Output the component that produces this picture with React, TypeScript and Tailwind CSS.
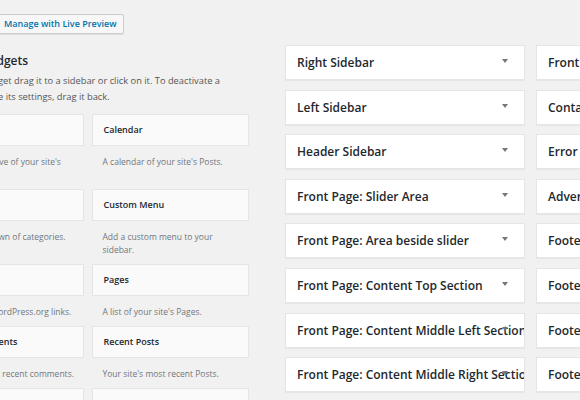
import { ReactNode } from "react";

const widgets = [
  { name: "Archives", desc: "A monthly archive of your site's Posts." },
  { name: "Calendar", desc: "A calendar of your site's Posts." },
  { name: "Categories", desc: "A list or dropdown of categories." },
  { name: "Custom Menu", desc: "Add a custom menu to your sidebar." },
  { name: "Meta", desc: "Login, RSS, & WordPress.org links." },
  { name: "Pages", desc: "A list of your site's Pages." },
  { name: "Recent Comments", desc: "Your site's most recent comments." },
  { name: "Recent Posts", desc: "Your site's most recent Posts." },
  { name: "RSS", desc: "Entries from any RSS or Atom feed." },
  { name: "Search", desc: "A search form for your site." },
];

const leftSidebars = [
  "Right Sidebar",
  "Left Sidebar",
  "Header Sidebar",
  "Front Page: Slider Area",
  "Front Page: Area beside slider",
  "Front Page: Content Top Section",
  "Front Page: Content Middle Left Section",
  "Front Page: Content Middle Right Section",
];

const rightSidebars = [
  "Front Page: Content Bottom Section",
  "Contact Page Sidebar",
  "Error 404 Page Sidebar",
  "Advertisement Area",
  "Footer 1",
  "Footer 2",
  "Footer 3",
  "Footer 4",
];

function SidebarBox({ title }: { title: string }): ReactNode {
  return (
    <div className="relative h-[35px] w-[240px] shrink-0 border border-[#e5e5e5] bg-white shadow-[0_1px_1px_rgba(0,0,0,0.04)]">
      <h3 className="overflow-hidden whitespace-nowrap pl-[11px] pr-[5px] text-[12px] font-semibold leading-[33px] text-[#23282d]">
        {title}
      </h3>
      <span className="absolute right-[16px] top-[13px] h-0 w-0 border-x-[3px] border-t-[4px] border-x-transparent border-t-[#72777c]" />
    </div>
  );
}

export default function App() {
  return (
    <div className="h-[400px] w-[580px] overflow-hidden bg-[#f1f1f1] font-['Open_Sans','Noto_Sans',sans-serif]">
      <div className="-ml-[74px] w-[700px]">
        <div className="flex h-[45px] items-start pt-[14px]">
          <button className="ml-[71px] h-[20px] rounded-[2px] border border-[#ccc] bg-[#f7f7f7] px-[6px] text-[9px] font-semibold leading-[18px] text-[#0073aa] shadow-[0_1px_0_#ddd]">
            Manage with Live Preview
          </button>
        </div>

        <div className="flex">
          <div className="w-[323px] shrink-0">
            <h2 className="pt-[8px] text-[12px] font-semibold leading-[16px] text-[#23282d]">Available Widgets</h2>
            <p className="mt-[4px] text-[9.3px] leading-[16px] text-[#555]">
              To activate a widget drag it to a sidebar or click on it. To deactivate a
              <br />
              widget and delete its settings, drag it back.
            </p>
            <div className="mt-[9px] grid grid-cols-2 gap-x-[8px]">
              {widgets.map((w) => (
                <div key={w.name}>
                  <div className="h-[32px] border border-[#e5e5e5] bg-[#fafafa] pl-[11px] text-[9px] font-semibold leading-[30px] text-[#23282d]">
                    {w.name}
                  </div>
                  <p className="pb-[8px] pl-[11px] pr-[8px] pt-[9px] text-[8.5px] leading-[13px] text-[#72777c]">
                    {w.desc}
                  </p>
                </div>
              ))}
            </div>
          </div>

          <div className="ml-[36px] flex gap-[11px]">
            <div className="flex flex-col gap-[9.6px]">
              {leftSidebars.map((s) => (
                <SidebarBox key={s} title={s} />
              ))}
            </div>
            <div className="flex flex-col gap-[9.6px]">
              {rightSidebars.map((s) => (
                <SidebarBox key={s} title={s} />
              ))}
            </div>
          </div>
        </div>
      </div>
    </div>
  );
}
